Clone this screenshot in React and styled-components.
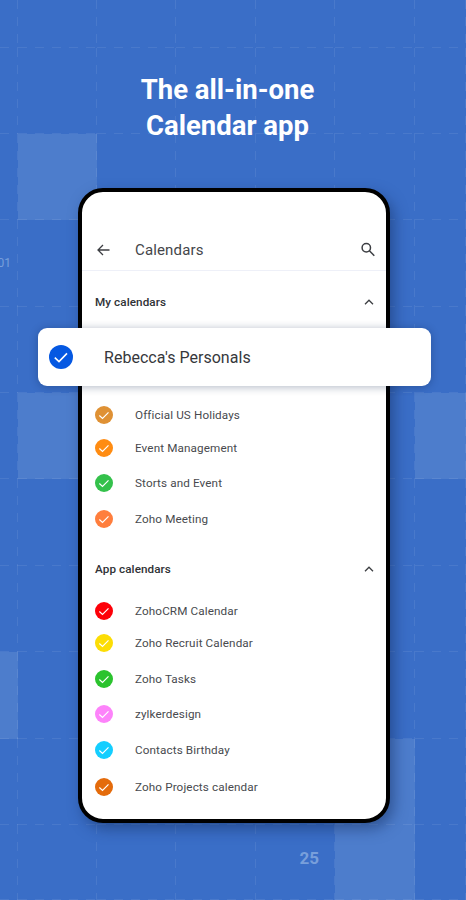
import React from "react";
import styled, { createGlobalStyle } from "styled-components";

const GlobalStyle = createGlobalStyle`
  * {
    box-sizing: border-box;
  }

  body {
    margin: 0;
    background: #3a6ec7;
    font-family: Roboto, "Liberation Sans", sans-serif;
  }
`;

const Page = styled.div`
  display: grid;
  width: 466px;
  height: 900px;
  overflow: hidden;
  background: #3a6ec7;
`;

const Backdrop = styled.div`
  grid-area: 1 / 1;
  display: grid;
  height: 900px;
  overflow: hidden;
  grid-template-columns: 18px 79px 79px 80px 79px 80px 51px;
  grid-template-rows: 47.5px repeat(9, 86.4px) 74.9px;
`;

const Cell = styled.div`
  display: flex;
  justify-content: flex-end;
  background-color: ${({ $filled }) => ($filled ? "#4d7dcc" : "transparent")};
  background-image: repeating-linear-gradient(
      90deg,
      rgba(255, 255, 255, 0.08) 0 9px,
      transparent 9px 17px
    ),
    repeating-linear-gradient(
      180deg,
      rgba(255, 255, 255, 0.08) 0 9px,
      transparent 9px 17px
    );
  background-size: 100% 1px, 1px 100%;
  background-position: left bottom, right top;
  background-repeat: no-repeat;
`;

const DayNumber = styled.span`
  padding: ${({ $large }) => ($large ? "23px 16px 0 0" : "35px 7px 0 0")};
  font-size: ${({ $large }) => ($large ? "17px" : "12px")};
  font-weight: ${({ $large }) => ($large ? 700 : 400)};
  line-height: ${({ $large }) => ($large ? "20px" : "16px")};
  color: #789fdb;
`;

const Content = styled.main`
  grid-area: 1 / 1;
  z-index: 1;
  display: flex;
  flex-direction: column;
  align-items: center;
  width: 468px;
`;

const Title = styled.h1`
  margin: 72px 13px 0 0;
  font-size: 27.5px;
  font-weight: 700;
  line-height: 36px;
  text-align: center;
  color: #fff;
`;

const Phone = styled.section`
  display: flex;
  flex-direction: column;
  width: 312px;
  height: 635px;
  margin-top: 44px;
  border: 4px solid #000;
  border-radius: 25px;
  background: #fff;
  box-shadow: 4px 6px 14px rgba(20, 45, 95, 0.5);
`;

const TopBar = styled.header`
  display: flex;
  flex: none;
  align-items: flex-end;
  height: 79px;
  padding: 0 9px 11px 13px;
  border-bottom: 1px solid #eef0f8;
`;

const ScreenTitle = styled.h2`
  flex: 1;
  margin: 0 0 0 23px;
  font-size: 15px;
  font-weight: 400;
  line-height: 18px;
  letter-spacing: 0.15px;
  color: #44464a;
`;

const GroupHeader = styled.div`
  display: flex;
  flex: none;
  align-items: center;
  justify-content: space-between;
  height: 20px;
  margin-top: ${({ $top }) => $top}px;
  padding: 0 11px 0 13px;
  font-size: 11.7px;
  font-weight: 500;
  letter-spacing: 0.08px;
  color: #303236;
`;

const List = styled.ul`
  display: flex;
  flex-direction: column;
  margin: 0;
  padding: 0;
  list-style: none;
`;

const Row = styled.li`
  display: flex;
  align-items: center;
  gap: 22px;
  height: 18px;
  margin-top: ${({ $top }) => $top}px;
  padding-left: 13px;
  font-size: 11.7px;
  letter-spacing: 0.12px;
  color: #484a4e;
`;

const Featured = styled.div`
  display: flex;
  flex: none;
  align-items: center;
  gap: 31px;
  width: 393px;
  height: 58px;
  margin: 16px 0 0 -44px;
  padding-left: 11px;
  border-radius: 9px;
  background: #fff;
  box-shadow: 0 1px 8px rgba(10, 30, 70, 0.32);
  font-size: 16px;
  letter-spacing: 0.03px;
  color: #36383c;
`;

const Disc = styled.span`
  display: flex;
  flex: none;
  align-items: center;
  justify-content: center;
  width: ${({ $size }) => $size}px;
  height: ${({ $size }) => $size}px;
  border-radius: 50%;
  background: ${({ $color }) => $color};
`;

const Icon = styled.svg`
  display: block;
  flex: none;
  fill: none;
  stroke: ${({ $stroke }) => $stroke || "#3c3e42"};
`;

function Check({ color, size = 18 }) {
  return (
    <Disc $color={color} $size={size}>
      <Icon
        $stroke="#fff"
        width={size}
        height={size}
        viewBox="0 0 24 24"
        strokeWidth="1.6"
      >
        <path d="M5.8 12.6l4.2 4 8-8.2" />
      </Icon>
    </Disc>
  );
}

function Chevron() {
  return (
    <Icon width="12" height="12" viewBox="0 0 12 12" strokeWidth="1.3">
      <path d="M2 8.2l4-4 4 4" />
    </Icon>
  );
}

const COLUMNS = 7;
const ROWS = 11;

// cells of the month grid, keyed by row-column
const filledCells = ["2-1", "5-1", "5-6", "8-0", "9-5", "10-5"];

const myCalendars = [
  { name: "Official US Holidays", color: "#df9134", top: 20 },
  { name: "Event Management", color: "#ff8c12", top: 15 },
  { name: "Storts and Event", color: "#34c14b", top: 17 },
  { name: "Zoho Meeting", color: "#ff7e3d", top: 18 },
];

const appCalendars = [
  { name: "ZohoCRM Calendar", color: "#fd0008", top: 23 },
  { name: "Zoho Recruit Calendar", color: "#fcdd05", top: 14 },
  { name: "Zoho Tasks", color: "#2bc32e", top: 18 },
  { name: "zylkerdesign", color: "#fd83fa", top: 17 },
  { name: "Contacts Birthday", color: "#14ceff", top: 18 },
  { name: "Zoho Projects calendar", color: "#e46b0b", top: 19 },
];

function CalendarList({ items }) {
  return (
    <List>
      {items.map((item) => (
        <Row key={item.name} $top={item.top}>
          <Check color={item.color} />
          {item.name}
        </Row>
      ))}
    </List>
  );
}

function MonthGrid() {
  const cells = [];
  for (let row = 0; row < ROWS; row++) {
    for (let col = 0; col < COLUMNS; col++) {
      const key = `${row}-${col}`;
      cells.push(
        <Cell key={key} $filled={filledCells.includes(key)}>
          {key === "3-0" && <DayNumber>01</DayNumber>}
          {key === "10-4" && <DayNumber $large>25</DayNumber>}
        </Cell>
      );
    }
  }
  return <Backdrop>{cells}</Backdrop>;
}

function App() {
  return (
    <Page>
      <GlobalStyle />
      <MonthGrid />
      <Content>
        <Title>
          The all-in-one
          <br />
          Calendar app
        </Title>
        <Phone>
          <TopBar>
            <Icon width="17" height="18" viewBox="0 0 17 18" strokeWidth="1.3">
              <path d="M14.5 9H3M8 4L3 9l5 5" />
            </Icon>
            <ScreenTitle>Calendars</ScreenTitle>
            <Icon width="18" height="18" viewBox="0 0 18 18" strokeWidth="1.5">
              <circle cx="7.3" cy="6.7" r="4.2" />
              <path d="M10.4 9.8l4.9 4.9" />
            </Icon>
          </TopBar>

          <GroupHeader $top={21}>
            My calendars
            <Chevron />
          </GroupHeader>
          <Featured>
            <Check color="#0558e2" size={24} />
            Rebecca's Personals
          </Featured>
          <CalendarList items={myCalendars} />

          <GroupHeader $top={31}>
            App calendars
            <Chevron />
          </GroupHeader>
          <CalendarList items={appCalendars} />
        </Phone>
      </Content>
    </Page>
  );
}

export default App;
